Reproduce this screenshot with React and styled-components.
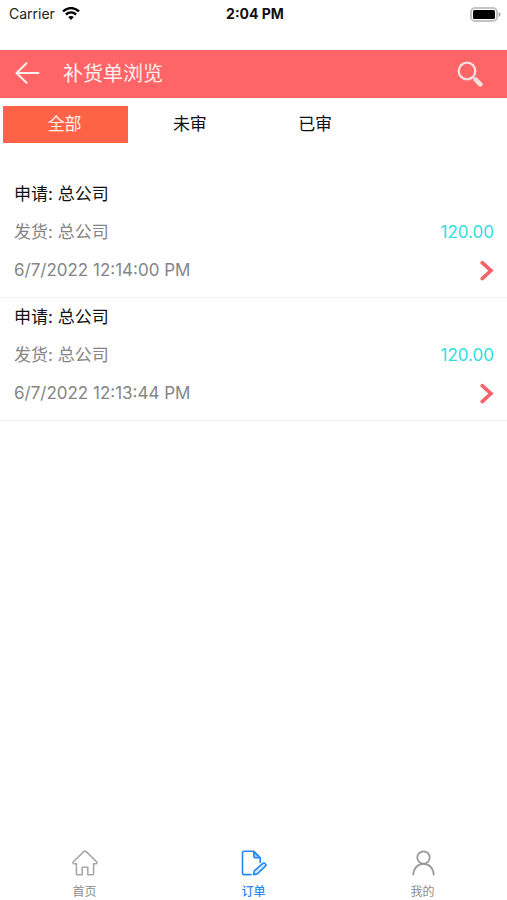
import React, { useState } from 'react';
import styled, { createGlobalStyle } from 'styled-components';

const GlobalStyle = createGlobalStyle`
  * {
    box-sizing: border-box;
  }

  body {
    margin: 0;
    background: #fff;
    font-family: Inter, "Noto Sans CJK SC", sans-serif;
  }

  button {
    padding: 0;
    border: none;
    background: none;
    font: inherit;
    color: inherit;
    cursor: pointer;
  }

  svg {
    display: block;
  }
`;

const Screen = styled.div`
  display: flex;
  flex-direction: column;
  min-height: 100vh;
`;

const StatusBar = styled.div`
  display: grid;
  grid-template-columns: 1fr auto 1fr;
  align-items: center;
  height: 28px;
  margin-bottom: 22px;
  padding: 0 6px 0 9px;
  font-size: 14px;
  line-height: 20px;
  color: #222;
`;

const Carrier = styled.div`
  display: flex;
  align-items: center;
  gap: 7px;
`;

const Clock = styled.div`
  font-weight: 700;
  color: #111;
`;

const Battery = styled.div`
  justify-self: end;
`;

const Header = styled.header`
  display: flex;
  align-items: center;
  height: 48px;
  padding: 0 24px 0 15px;
  background: #ff6466;
  color: #fff;
`;

const Title = styled.h1`
  flex: 1;
  margin: 0 0 0 23px;
  font-size: 20px;
  font-weight: 400;
  line-height: 28px;
  color: #ffefef;
`;

const Tabs = styled.div`
  display: grid;
  grid-template-columns: repeat(4, 1fr);
  padding: 8px 3px 0;
`;

const Tab = styled.button`
  && {
    height: 37px;
    padding: 0 2px 2px 0;
    font-size: 17px;
    line-height: 24px;
    background: ${props => props.$active ? '#ff6347' : 'transparent'};
    color: ${props => props.$active ? '#ffefeb' : '#111'};
  }
`;

const List = styled.main`
  flex: 1;
  padding-top: 32px;
`;

const Item = styled.article`
  padding: 0 13px 8px 14px;
  border-bottom: 1px solid #f2f2f2;
`;

const Row = styled.div`
  display: flex;
  align-items: center;
  justify-content: space-between;
  height: 38px;
  font-size: 17px;
  line-height: 24px;
  color: ${props => props.$strong ? '#111' : '#858585'};
`;

const Amount = styled.span`
  color: #2ee0e0;
`;

const BottomNav = styled.nav`
  display: grid;
  grid-template-columns: repeat(3, 1fr);
  height: 58px;
  padding-top: 8px;
`;

const NavLink = styled.a`
  display: flex;
  flex-direction: column;
  align-items: center;
  gap: 8px;
  font-size: 12px;
  font-weight: ${props => props.$active ? 500 : 400};
  line-height: 16px;
  text-decoration: none;
  color: ${props => props.$active ? '#2688f5' : '#8c8c8c'};
`;

const WifiIcon = () => (
  <svg width="18" height="14" viewBox="0 0 18 14" fill="none" stroke="#000" strokeWidth="2.4" aria-hidden="true">
    <path d="M1 4.400C5.600 0 12.400 0 17 4.400" />
    <path d="M3.900 7.500c3-2.800 7.200-2.800 10.200 0" />
    <path d="M6.200 10c1.600-1.500 4-1.500 5.600 0L9 13z" fill="#000" stroke="none" />
  </svg>
);

const BatteryIcon = () => (
  <svg width="31" height="15" viewBox="0 0 31 15" aria-hidden="true">
    <rect x="1" y="1" width="26" height="13" rx="4" fill="#fff" stroke="#c4c4c4" strokeWidth="2" />
    <rect x="3" y="3" width="22" height="9" rx="1.6" fill="#000" />
    <path d="M28.600 5v5c1.100-.4 1.900-1.400 1.900-2.500S29.700 5.400 28.600 5z" fill="#a0a0a0" />
  </svg>
);

const BackIcon = () => (
  <svg width="25" height="24" viewBox="0 0 25 24" fill="none" stroke="#ffefef" strokeWidth="2" strokeLinecap="round" strokeLinejoin="round" aria-hidden="true">
    <path d="M11.500 1.200 1.500 11l10 9.800M1.500 11h22" />
  </svg>
);

const SearchIcon = () => (
  <svg width="26" height="26" viewBox="0 0 26 26" fill="none" stroke="#f3e0e0" aria-hidden="true">
    <circle cx="10" cy="10" r="8.300" strokeWidth="2.300" />
    <path d="m16 16 2 2" strokeWidth="1.600" />
    <path d="m18.700 18.700 4.600 4.600" strokeWidth="4.600" strokeLinecap="round" />
  </svg>
);

const ChevronIcon = () => (
  <svg width="14" height="22" viewBox="0 0 14 22" fill="none" stroke="#f4646a" strokeWidth="3.600" strokeLinecap="round" aria-hidden="true">
    <path d="m2.200 3.600 8.800 8-8.800 8" />
  </svg>
);

const HomeIcon = () => (
  <svg width="26" height="26" viewBox="0 0 26 26" fill="none" stroke="#a8a8a8" strokeWidth="1.600" strokeLinejoin="round" aria-hidden="true">
    <path d="M11.800 1.600 1.400 11.800c-.8.800-.4 1.900.7 1.900h2.300v9.700c0 .9.500 1.400 1.400 1.400h4.400v-7.600h5.600v7.600h4.400c.9 0 1.400-.5 1.400-1.400v-9.700h2.300c1.100 0 1.500-1.100.7-1.900L14.200 1.600c-.7-.7-1.700-.7-2.400 0z" />
  </svg>
);

const OrderIcon = () => (
  <svg width="26" height="26" viewBox="0 0 26 26" fill="none" stroke="#2688f5" strokeWidth="1.600" strokeLinecap="round" strokeLinejoin="round" aria-hidden="true">
    <path d="M10 24.600H3.200c-1 0-1.700-.7-1.700-1.700V3c0-1 .7-1.700 1.700-1.700h9.600l6.400 6.400v4.800" />
    <path d="M12.800 1.600v4.600c0 1 .6 1.600 1.600 1.600h4.600z" fill="#a9d0fb" />
    <path d="m13.300 20.800 8.500-7.400c1.600-1.300 4.100 1.200 2.700 2.800l-8.300 7.700-3.700.9z" fill="#d3e7fd" />
  </svg>
);

const UserIcon = () => (
  <svg width="26" height="26" viewBox="0 0 26 26" fill="none" stroke="#999" strokeWidth="1.800" strokeLinecap="round" aria-hidden="true">
    <circle cx="13.500" cy="7.500" r="6.200" />
    <path d="M3.300 24.500c.3-6.300 4.400-10.600 10.200-10.600s9.900 4.300 10.200 10.600" />
  </svg>
);

const tabs = ['全部', '未审', '已审'];

const orders = [
  { id: 1, applicant: '总公司', shipper: '总公司', amount: '120.00', time: '6/7/2022 12:14:00 PM' },
  { id: 2, applicant: '总公司', shipper: '总公司', amount: '120.00', time: '6/7/2022 12:13:44 PM' },
];

const navItems = [
  { label: '首页', href: '#home', Icon: HomeIcon },
  { label: '订单', href: '#orders', Icon: OrderIcon },
  { label: '我的', href: '#mine', Icon: UserIcon },
];

const App = () => {
  const [activeTab, setActiveTab] = useState(0);

  return (
    <>
      <GlobalStyle />
      <Screen>
        <StatusBar>
          <Carrier>
            Carrier
            <WifiIcon />
          </Carrier>
          <Clock>2:04 PM</Clock>
          <Battery>
            <BatteryIcon />
          </Battery>
        </StatusBar>

        <Header>
          <button type="button" aria-label="返回">
            <BackIcon />
          </button>
          <Title>补货单浏览</Title>
          <button type="button" aria-label="搜索">
            <SearchIcon />
          </button>
        </Header>

        <Tabs>
          {tabs.map((label, index) => (
            <Tab
              key={label}
              type="button"
              $active={index === activeTab}
              aria-pressed={index === activeTab}
              onClick={() => setActiveTab(index)}
            >
              {label}
            </Tab>
          ))}
        </Tabs>

        <List>
          {orders.map(order => (
            <Item key={order.id}>
              <Row $strong>申请: {order.applicant}</Row>
              <Row>
                <span>发货: {order.shipper}</span>
                <Amount>{order.amount}</Amount>
              </Row>
              <Row>
                <time>{order.time}</time>
                <button type="button" aria-label="查看详情">
                  <ChevronIcon />
                </button>
              </Row>
            </Item>
          ))}
        </List>

        <BottomNav>
          {navItems.map(({ label, href, Icon }) => (
            <NavLink key={label} href={href} $active={label === '订单'}>
              <Icon />
              {label}
            </NavLink>
          ))}
        </BottomNav>
      </Screen>
    </>
  );
};

export default App;
